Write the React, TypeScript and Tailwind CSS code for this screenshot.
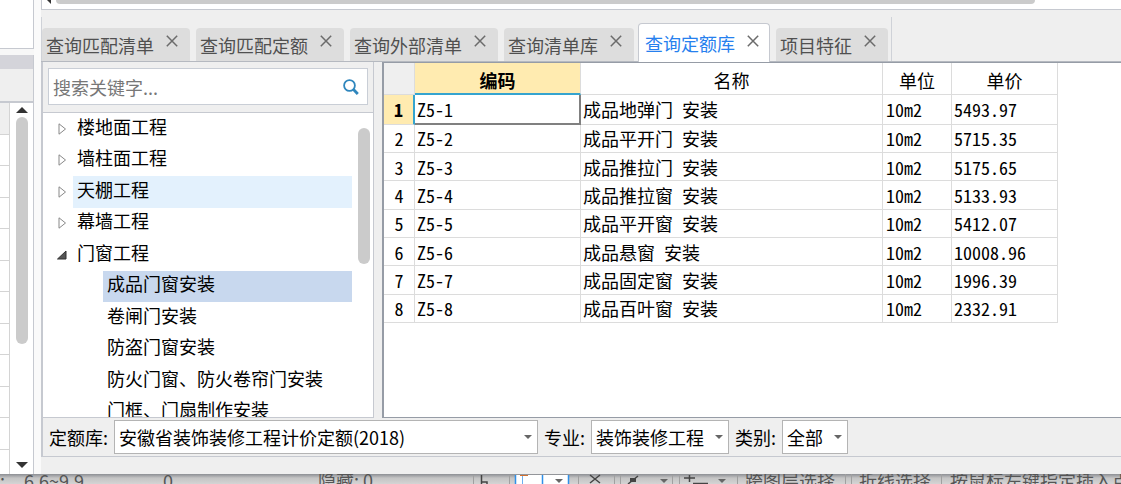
import React from 'react';

interface Tab {
  title: string;
  active?: boolean;
}

interface TreeNode {
  label: string;
  child?: boolean;
  open?: boolean;
  state?: 'hover' | 'selected';
}

interface QuotaRow {
  code: string;
  name: string;
  unit: string;
  price: string;
}

const tabs: Tab[] = [
  { title: '查询匹配清单' },
  { title: '查询匹配定额' },
  { title: '查询外部清单' },
  { title: '查询清单库' },
  { title: '查询定额库', active: true },
  { title: '项目特征' },
];

const treeNodes: TreeNode[] = [
  { label: '楼地面工程' },
  { label: '墙柱面工程' },
  { label: '天棚工程', state: 'hover' },
  { label: '幕墙工程' },
  { label: '门窗工程', open: true },
  { label: '成品门窗安装', child: true, state: 'selected' },
  { label: '卷闸门安装', child: true },
  { label: '防盗门窗安装', child: true },
  { label: '防火门窗、防火卷帘门安装', child: true },
  { label: '门框、门扇制作安装', child: true },
];

const rows: QuotaRow[] = [
  { code: 'Z5-1', name: '成品地弹门 安装', unit: '10m2', price: '5493.97' },
  { code: 'Z5-2', name: '成品平开门 安装', unit: '10m2', price: '5715.35' },
  { code: 'Z5-3', name: '成品推拉门 安装', unit: '10m2', price: '5175.65' },
  { code: 'Z5-4', name: '成品推拉窗 安装', unit: '10m2', price: '5133.93' },
  { code: 'Z5-5', name: '成品平开窗 安装', unit: '10m2', price: '5412.07' },
  { code: 'Z5-6', name: '成品悬窗 安装', unit: '10m2', price: '10008.96' },
  { code: 'Z5-7', name: '成品固定窗 安装', unit: '10m2', price: '1996.39' },
  { code: 'Z5-8', name: '成品百叶窗 安装', unit: '10m2', price: '2332.91' },
];

const CloseIcon = () => (
  <svg className="w-3 h-3" viewBox="0 0 12 12" fill="none" stroke="#6b6b6b" strokeWidth="1.5">
    <path d="M0.8 0.8 L11.2 11.2 M11.2 0.8 L0.8 11.2" />
  </svg>
);

const SearchIcon = () => (
  <svg className="w-4 h-4" viewBox="0 0 16 16" fill="none" stroke="#2f86bd">
    <circle cx="6.5" cy="6.5" r="5.4" strokeWidth="1.8" />
    <path d="M10.5 10.5 L14.8 15" strokeWidth="2.8" />
  </svg>
);

const DownTriangle = () => (
  <svg className="w-2 h-1" viewBox="0 0 8 4" fill="#666">
    <path d="M0 0 H8 L4 4 Z" />
  </svg>
);

const TreeArrow: React.FC<{ open?: boolean }> = ({ open }) => (
  <svg className="w-[10px] h-3" viewBox="0 0 10 12">
    {open ? (
      <path d="M0.5 10 L9 2 V10 Z" fill="#555" stroke="#333" />
    ) : (
      <path d="M2 0.8 L8.5 6 L2 11.2 Z" fill="none" stroke="#888" />
    )}
  </svg>
);

const LeftStrip = () => (
  <aside className="w-[34px] shrink-0 flex flex-col bg-[#f7f7f7]">
    <div className="h-[49px] shrink-0 bg-white border-r border-b border-[#c6c9d0]" />
    <div className="mt-1.5 flex-1 min-h-0 flex flex-col border-r border-[#c6c9d0] bg-white">
      <div className="h-[14px] shrink-0 bg-[#d4d4da]" />
      <div className="h-[34px] shrink-0 bg-[#efefef] border-b-2 border-[#c6c9d0]" />
      <div className="flex-1 min-h-0 flex">
        <div className="w-[10px] overflow-hidden border-r border-[#d4d4d4]">
          <div className="h-[378px] flex flex-col">
            {Array.from({ length: 12 }, (_, i) => (
              <div key={i} className="flex-1 border-b border-[#d4d4d4] first:bg-[#efefef]" />
            ))}
          </div>
        </div>
        <div className="flex-1 flex flex-col items-center pt-1 pb-[6px]">
          <svg className="w-3 h-1.5 shrink-0" viewBox="0 0 12 6" fill="#333"><path d="M0 6 L6 0 L12 6 Z" /></svg>
          <div className="mt-1 w-3 h-[227px] rounded-full bg-[#cbcbcb]" />
          <svg className="w-3 h-1.5 shrink-0 mt-auto" viewBox="0 0 12 6" fill="#333"><path d="M0 0 L6 6 L12 0 Z" /></svg>
        </div>
      </div>
    </div>
  </aside>
);

const TabBar = () => (
  <div className="mt-[7px] flex items-stretch h-[45px] border-b border-[#b5b9c0]">
    <nav className="flex items-end gap-[6px] border-l border-r border-[#cfd2d8] pr-[3px]">
      {tabs.map(tab =>
        tab.active ? (
          <div key={tab.title} className="-ml-[2px] -mb-px h-[39px] flex items-center bg-white border border-b-0 border-[#c6c9d0] rounded-t-[4px] pl-[6px] pr-[10px] gap-3">
            <button className="text-[#2680ee] leading-6">{tab.title}</button>
            <button aria-label={`关闭${tab.title}`} className="mb-1"><CloseIcon /></button>
          </div>
        ) : (
          <div key={tab.title} className="h-[33px] flex items-center bg-[#dddddd] rounded-t-[4px] pl-1 pr-3 gap-3">
            <button className="text-[#505050] leading-6">{tab.title}</button>
            <button aria-label={`关闭${tab.title}`} className="mb-2"><CloseIcon /></button>
          </div>
        )
      )}
    </nav>
  </div>
);

const TreePanel = () => (
  <section className="w-[331px] shrink-0 flex flex-col border-r border-b border-[#c6c9d0]">
    <div className="px-[5px] pt-[6px] pb-[7px] border-b border-[#c6c9d0]">
      <div className="h-[37px] flex items-center bg-white border border-[#c9ced6] px-1">
        <input type="text" aria-label="搜索" placeholder="搜索关键字..." className="flex-1 min-w-0 outline-none placeholder:text-[#777]" />
        <button aria-label="搜索" className="mr-1"><SearchIcon /></button>
      </div>
    </div>
    <div className="flex-1 min-h-0 flex bg-white overflow-hidden">
      <ul className="flex-1 h-[315px] flex flex-col pl-[14px] leading-6">
        {treeNodes.map(node => (
          <li key={node.label} className="flex-1 flex items-stretch">
            <span className={`flex items-center shrink-0 ${node.child ? 'w-[46px]' : 'w-4'}`}>
              {!node.child && <TreeArrow open={node.open} />}
            </span>
            <span
              className={`flex-1 flex items-center pl-1 pb-[6px] ${
                node.state === 'hover' ? 'bg-[#e3f1fd]' : node.state === 'selected' ? 'bg-[#c8d8ee]' : ''
              }`}
            >
              {node.label}
            </span>
          </li>
        ))}
      </ul>
      <div className="w-[21px] pl-[6px] pt-[15px]">
        <div className="w-3 h-[136px] rounded-full bg-[#cbcbcb]" />
      </div>
    </div>
  </section>
);

const QuotaTable = () => (
  <section className="ml-2 flex-1 min-w-0 overflow-hidden bg-white border-l-2 border-y border-[#969ca6]">
    <table className="table-fixed w-[674px] h-[260px] border-separate border-spacing-0 [font-feature-settings:'hwid'] leading-5">
      <colgroup>
        <col className="w-[31px]" />
        <col className="w-[166px]" />
        <col className="w-[302px]" />
        <col className="w-[69px]" />
        <col className="w-[106px]" />
      </colgroup>
      <thead>
        <tr className="h-8">
          <th className="bg-[#efefef] border-r border-b border-[#dcdcdc]" />
          <th className="pt-[3px] bg-[#ffebb0] border-r border-b-2 border-r-[#dcdcdc] border-b-[#35a4cf] font-bold">编码</th>
          <th className="pt-[3px] border-r border-b border-[#dcdcdc] font-normal">名称</th>
          <th className="pt-[3px] border-r border-b border-[#dcdcdc] font-normal">单位</th>
          <th className="pt-[3px] border-r border-b border-[#dcdcdc] font-normal">单价</th>
        </tr>
      </thead>
      <tbody>
        {rows.map((row, i) => (
          <tr key={row.code}>
            <th
              className={
                i === 0
                  ? 'bg-[#ffebb0] border-b border-r-2 border-b-[#dcdcdc] border-r-[#35a4cf] font-bold'
                  : 'border-b border-r border-[#dcdcdc] font-normal'
              }
            >
              {i + 1}
            </th>
            <td className={i === 0 ? 'pl-[2px] border-r-2 border-b-2 border-[#808080]' : 'pl-[2px] border-r border-b border-[#dcdcdc]'}>
              {row.code}
            </td>
            <td className="pl-[2px] border-r border-b border-[#dcdcdc]">{row.name}</td>
            <td className="pl-[3px] border-r border-b border-[#dcdcdc]">{row.unit}</td>
            <td className="pl-[2px] border-r border-b border-[#dcdcdc]">{row.price}</td>
          </tr>
        ))}
      </tbody>
    </table>
  </section>
);

interface PickerProps {
  id: string;
  label: string;
  value: string;
  width: string;
}

const Picker: React.FC<PickerProps> = ({ id, label, value, width }) => (
  <div className="flex items-center gap-[6px]">
    <label htmlFor={id}>{label}</label>
    <div className={`relative ${width}`}>
      <select id={id} className="appearance-none w-full h-[34px] bg-white border border-[#b4b4b4] pl-1 pr-5 outline-none">
        <option>{value}</option>
      </select>
      <span className="absolute right-[6px] top-[15px] pointer-events-none"><DownTriangle /></span>
    </div>
  </div>
);

const ToolStrip = () => (
  <svg className="w-[266px] h-[10px] shrink-0" viewBox="0 0 266 10" fill="none">
    <path d="M0.5 1 V10 M36.5 1 V10 M105.5 1 V10 M141.5 1 V10 M147.5 1 V10 M199.5 1 V10 M206.5 1 V10 M264.5 1 V10" stroke="#a0a0a0" />
    <path d="M43 1 H95 V10 H43 Z" fill="#fff" />
    <path d="M42.5 1 V10 M69.5 1 V10 M95.5 1 V10" stroke="#2f8fe8" strokeWidth="1.5" />
    <path d="M49.5 1 V10" stroke="#6aaef0" />
    <path d="M47 1.5 H55" stroke="#d07030" />
    <path d="M8.5 1 V10 M8 8 H14 V10" stroke="#444" strokeWidth="1.5" />
    <path d="M117 1 L127 9 M127 1 L117 9 M155 10 L165 2" stroke="#444" strokeWidth="1.5" />
    <path d="M157 4 H163 V8 H157 Z" fill="#444" />
    <path d="M211 4 H222 M216.5 1 V8 M220 9.5 H235" stroke="#444" strokeWidth="1.5" />
    <path d="M82 5 H90 L86 9 Z M187 5 H195 L191 9 Z M245 5 H253 L249 9 Z" fill="#666" />
  </svg>
);

const StatusBar = () => (
  <footer className="h-[10px] shrink-0 flex items-start overflow-hidden whitespace-nowrap leading-3 text-[#555] bg-linear-to-b from-[#8d8f94] via-[#c4c4c4] via-40% to-[#d4d4d4]">
    <span className="w-6 shrink-0">:</span>
    <span className="w-[139px] shrink-0">6.6~9.9</span>
    <span className="w-[155px] shrink-0">0</span>
    <span className="w-[155px] shrink-0">隐藏: 0</span>
    <ToolStrip />
    <span className="w-[107px] shrink-0 pl-[6px] border-r border-[#a0a0a0]">跨图层选择</span>
    <span className="ml-[5px] w-[91px] shrink-0 pl-[7px] border-x border-[#a0a0a0]">折线选择</span>
    <span className="pl-2">按鼠标左键指定插入点</span>
  </footer>
);

const App: React.FC = () => {
  return (
    <div className="h-screen flex flex-col overflow-hidden bg-[#efefef] text-lg text-black [font-family:'Noto_Sans_CJK_SC',sans-serif]">
      <div className="flex-1 min-h-0 flex">
        <LeftStrip />
        <div className="w-[7px] shrink-0 bg-[#fafafa]" />
        <main className="flex-1 min-w-0 flex flex-col">
          <div className="h-[10px] shrink-0 flex items-start bg-white border-l border-b border-[#c6c9d0] pl-[5px]">
            <svg className="w-1 h-1" viewBox="0 0 4 4" fill="#333"><path d="M0 0 H4 V4 Z" /></svg>
            <div className="ml-[5px] mr-[86px] flex-1 h-1 rounded-b-[4px] bg-[#cbcbcb]" />
          </div>
          <TabBar />
          <div className="flex-1 min-h-0 flex flex-col border-l-2 border-b border-[#c6c9d0]">
            <div className="flex-1 min-h-0 flex">
              <TreePanel />
              <QuotaTable />
            </div>
            <div className="h-[38px] shrink-0 flex items-center gap-[6px] pl-[6px]">
              <Picker id="library" label="定额库:" value="安徽省装饰装修工程计价定额(2018)" width="w-[424px]" />
              <Picker id="major" label="专业:" value="装饰装修工程" width="w-[138px]" />
              <Picker id="category" label="类别:" value="全部" width="w-[66px]" />
            </div>
          </div>
          <div className="h-[17px] shrink-0" />
        </main>
      </div>
      <StatusBar />
    </div>
  );
};

export default App;
